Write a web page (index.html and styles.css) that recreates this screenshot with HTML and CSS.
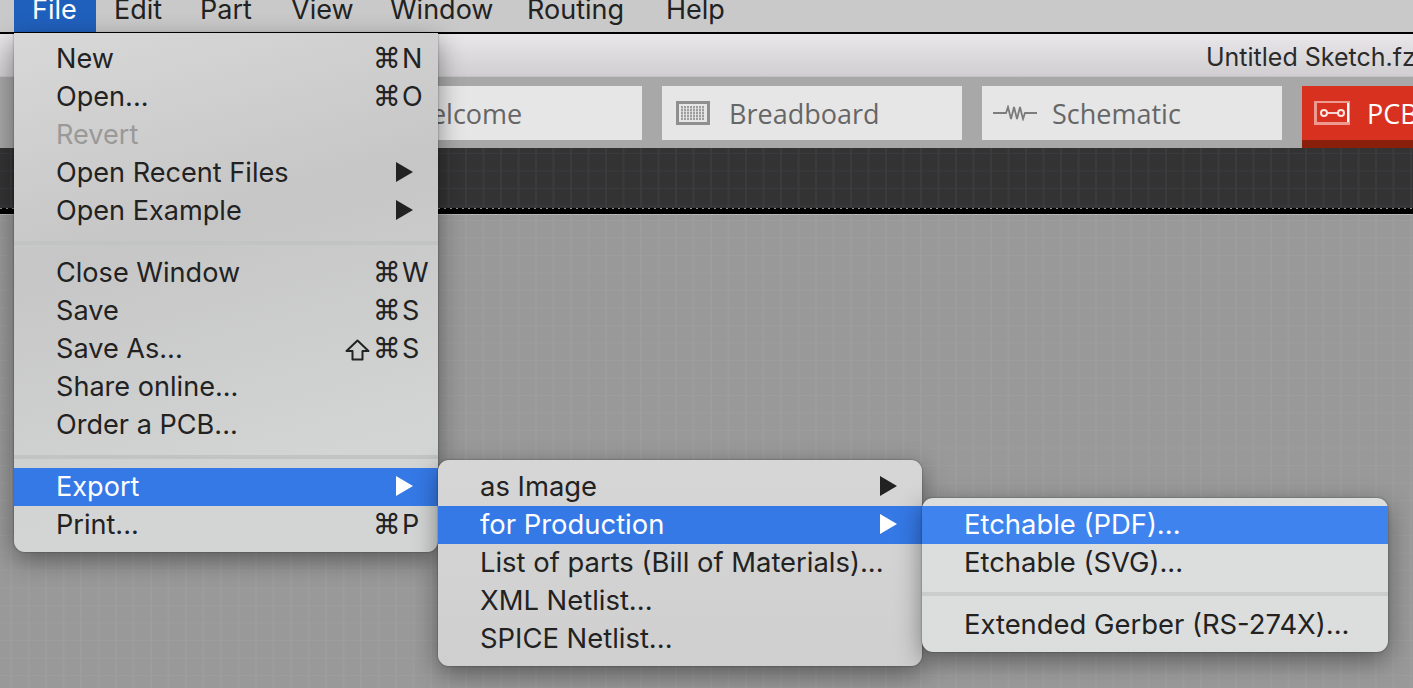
FILE: index.html
```html
<!DOCTYPE html>
<html lang="en">
<head>
  <meta charset="UTF-8">
  <meta name="viewport" content="width=device-width, initial-scale=1.0">
  <title>Fritzing export menu</title>
  <link rel="stylesheet" href="styles.css">
</head>
<body>
  <nav class="menubar">
    <span class="top-item top-file">File</span>
    <span class="top-item top-edit">Edit</span>
    <span class="top-item top-part">Part</span>
    <span class="top-item top-view">View</span>
    <span class="top-item top-window">Window</span>
    <span class="top-item top-routing">Routing</span>
    <span class="top-item top-help">Help</span>
  </nav>

  <div class="titlebar"><span class="doc-name">Untitled Sketch.fzz</span></div>

  <div class="tabstrip">
    <div class="tab tab-welcome">
      <span class="tab-icon"></span>
      <span>Welcome</span>
    </div>
    <div class="tab">
      <svg class="tab-icon" viewBox="0 0 34 24">
        <rect width="34" height="24" fill="#8f8f8f"/>
        <rect x="3" y="3" width="28" height="18" fill="#e6e6e6"/>
        <path d="M5 6h24M5 9h24M5 12h24M5 15h24M5 18h24" stroke="#777" stroke-width="1.4" stroke-dasharray="2 1"/>
        <path d="M6 5v14M9 5v14M12 5v14M15 5v14M18 5v14M21 5v14M24 5v14M27 5v14" stroke="#aaa" stroke-width="1"/>
      </svg>
      <span>Breadboard</span>
    </div>
    <div class="tab">
      <svg class="tab-icon schem-icon" viewBox="0 0 44 16">
        <path d="M0 8h13l2-6 3 12 3-12 3 12 3-12 3 12 2-6h12" fill="none" stroke="#7c7c7c" stroke-width="1.8"/>
      </svg>
      <span>Schematic</span>
    </div>
    <div class="tab tab-active">
      <svg class="tab-icon" viewBox="0 0 36 24">
        <rect width="36" height="24" fill="#ee9a90"/>
        <rect x="3" y="2" width="30" height="19" fill="#d8311f"/>
        <rect x="33" y="2" width="2" height="19" fill="#fff"/>
        <path d="M10 12h17" stroke="#f6d5d0" stroke-width="2"/>
        <circle cx="10" cy="12" r="3" fill="#d8311f" stroke="#fbe6e3" stroke-width="2"/>
        <circle cx="27" cy="12" r="3" fill="#d8311f" stroke="#fbe6e3" stroke-width="2"/>
      </svg>
      <span>PCB</span>
    </div>
  </div>

  <div class="toolbar"></div>
  <div class="canvas"></div>

  <!-- File menu -->
  <div class="menu menu-file">
    <div class="item"><span class="label">New</span><span class="keys"><i>⌘</i>N</span></div>
    <div class="item"><span class="label">Open...</span><span class="keys"><i>⌘</i>O</span></div>
    <div class="item disabled"><span class="label">Revert</span></div>
    <div class="item"><span class="label">Open Recent Files</span><span class="arrow"></span></div>
    <div class="item"><span class="label">Open Example</span><span class="arrow"></span></div>
    <div class="sep"></div>
    <div class="item"><span class="label">Close Window</span><span class="keys"><i>⌘</i>W</span></div>
    <div class="item"><span class="label">Save</span><span class="keys"><i>⌘</i>S</span></div>
    <div class="item">
      <span class="label">Save As...</span>
      <span class="keys">
        <svg class="shift" viewBox="0 0 25 22"><path d="M12.5 1.5 23.5 12H17.5V20.5H7.5V12H1.5Z" fill="none" stroke="#222" stroke-width="2" stroke-linejoin="round"/></svg><i>⌘</i>S
      </span>
    </div>
    <div class="item"><span class="label">Share online...</span></div>
    <div class="item"><span class="label">Order a PCB...</span></div>
    <div class="sep"></div>
    <div class="item active"><span class="label">Export</span><span class="arrow"></span></div>
    <div class="item"><span class="label">Print...</span><span class="keys"><i>⌘</i>P</span></div>
  </div>

  <!-- Export submenu -->
  <div class="menu menu-export">
    <div class="item"><span class="label">as Image</span><span class="arrow"></span></div>
    <div class="item active"><span class="label">for Production</span><span class="arrow"></span></div>
    <div class="item"><span class="label">List of parts (Bill of Materials)...</span></div>
    <div class="item"><span class="label">XML Netlist...</span></div>
    <div class="item"><span class="label">SPICE Netlist...</span></div>
  </div>

  <!-- for Production submenu -->
  <div class="menu menu-production">
    <div class="item active"><span class="label">Etchable (PDF)...</span></div>
    <div class="item"><span class="label">Etchable (SVG)...</span></div>
    <div class="sep"></div>
    <div class="item"><span class="label">Extended Gerber (RS-274X)...</span></div>
  </div>
</body>
</html>
```

FILE: styles.css
```css
html, body { margin: 0; height: 100%; }
body {
  position: relative;
  height: 688px;
  overflow: hidden;
  display: flex;
  flex-direction: column;
  font-family: Inter, "Liberation Sans", sans-serif;
  color: #222;
  background: #999;
}

/* top bar, the screenshot cuts the tops of the words off */
.menubar {
  flex: none;
  height: 32px;
  display: flex;
  background: #c9c9c9;
  border-bottom: 2px solid #000;
  font-size: 27px;
  line-height: 26px;
  overflow: hidden;
}
.top-item { flex: none; height: 35px; margin-top: -3px; }
.top-file { width: 64px; margin-left: 14px; padding-left: 18px; background: #2060bd; color: #fff; }
.top-edit { width: 86px; margin-left: 18px; }
.top-part { width: 91px; }
.top-view { width: 99px; }
.top-window { width: 137px; }
.top-routing { width: 139px; }

.titlebar {
  flex: none;
  height: 42px;
  padding-left: 1206px;
  display: flex;
  align-items: center;
  overflow: hidden;
  background: linear-gradient(#e9e7e9, #d0ced0);
  border-bottom: 1px solid #c4c2c4;
  font-size: 25px;
  white-space: nowrap;
}
.doc-name { margin-top: 3px; flex: none; color: #2a2a2a; }

.tabstrip {
  flex: none;
  height: 62px;
  padding: 9px 0 0 342px;
  display: flex;
  gap: 20px;
  background: #a8a8a8;
  overflow: hidden;
}
.tab {
  flex: none;
  box-sizing: border-box;
  width: 300px;
  height: 54px;
  padding-left: 14px;
  display: flex;
  align-items: center;
  background: #e6e6e6;
  color: #666;
  font-family: "Open Sans", "Noto Sans", sans-serif;
  font-size: 27px;
}
.tab-icon { flex: none; width: 34px; height: 24px; margin-right: 19px; }
.tab-welcome .tab-icon { margin-right: 16px; }
.schem-icon { width: 44px; height: 16px; margin-left: -3px; margin-right: 15px; }
.tab-active {
  width: 111px;
  height: 62px;
  padding-left: 12px;
  background: #d8311f;
  border-bottom: 8px solid #8a1f0b;
  color: #fff;
}
.tab-active .tab-icon { width: 36px; height: 24px; margin-right: 17px; }

/* dark strip and sketch area share the same 17.5px grid */
.toolbar {
  flex: none;
  height: 61px;
  background:
    repeating-linear-gradient(90deg, #8c8c8c 0 2px, #000 2px 6px) 0 100% / 100% 1px no-repeat,
    linear-gradient(90deg, #3a3b3f 0 1.5px, transparent 1.5px) 10px 0 / 17.5px 100%,
    linear-gradient(#3a3b3f 0 1px, transparent 1px) 0 5px / 100% 17.5px,
    #333;
}
.canvas {
  flex: 1;
  border-top: 5px solid #000;
  box-shadow: inset 0 1px #b5b5b5;
  background:
    linear-gradient(90deg, #9d9d9f 0 1.5px, transparent 1.5px) 10px 0 / 17.5px 100%,
    linear-gradient(#9d9d9f 0 1px, transparent 1px) 0 6px / 100% 17.5px,
    #999;
}

/* popup menus */
.menu {
  position: absolute;
  box-sizing: border-box;
  font-size: 27.4px;
  box-shadow: 0 8px 26px rgba(0, 0, 0, .42), 0 0 2px rgba(0, 0, 0, .45);
  border-radius: 11px;
}
.menu-file {
  left: 14px;
  top: 33px;
  width: 424px;
  height: 519px;
  padding-top: 7px;
  font-size: 27.1px;
  border-radius: 0 0 11px 11px;
  background: linear-gradient(165deg, #d8d8d8 0, #c6c6c6 38%, #d3d4d4 80%);
}
.menu-export {
  left: 438px;
  top: 460px;
  width: 484px;
  height: 206px;
  padding-top: 8px;
  background: linear-gradient(#d6d6d6, #cfcfcf);
}
.menu-production {
  left: 922px;
  top: 498px;
  width: 466px;
  height: 154px;
  padding-top: 8px;
  background: #dcdddd;
}
.item {
  box-sizing: border-box;
  height: 38px;
  padding: 0 0 2px 42px;
  display: flex;
  align-items: center;
  white-space: nowrap;
}
.label { flex: 1; }
.disabled { color: #999; }
.active { background: #3579e6; color: #fff; }
.menu-production .active { background: #3f83ee; }

.keys { flex: none; width: 65px; font-size: 27px; position: relative; }
.keys i { font-family: "DejaVu Sans", sans-serif; font-style: normal; font-size: 28px; line-height: 20px; margin-right: 1px; }
.shift { position: absolute; left: -28px; top: 7px; width: 25px; height: 22px; }

.arrow {
  flex: none;
  width: 0;
  height: 0;
  margin-right: 25px;
  border-left: 17px solid #222;
  border-top: 10px solid transparent;
  border-bottom: 10px solid transparent;
}
.active .arrow { border-left-color: #fff; }

.sep { height: 4px; margin: 11px 0 9px; background: #c2c3c3; }
.menu-production .sep { margin: 10px 0 10px; background: #cbcccc; }
```
